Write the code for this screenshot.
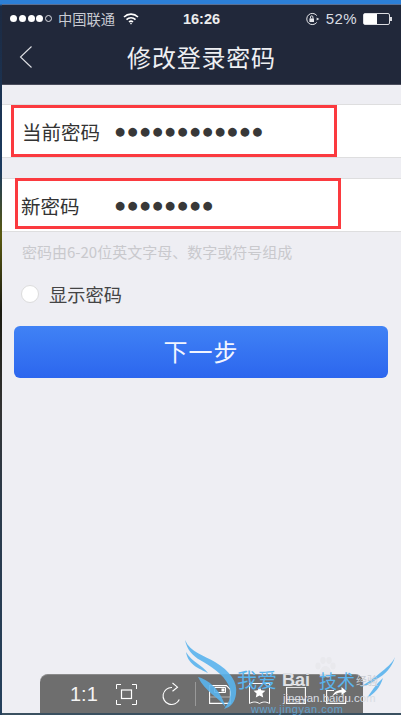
<div class="screen">
	<div class="edge"></div>
	<div class="page">
		<header class="top">
			<div class="status">
				<div class="status-left">
					<span class="signal">
						<i></i><i></i><i></i><i></i><i class="empty"></i>
					</span>
					<span>中国联通</span>
					<svg class="wifi" width="16" height="12" viewBox="0 0 16 12" fill="none" stroke="#fff" stroke-width="1.6">
						<path d="M1 4a10 10 0 0 1 14 0" />
						<path d="M3.5 6.6a6.4 6.4 0 0 1 9 0" />
						<path d="M6 9a3 3 0 0 1 4 0" />
						<circle cx="8" cy="10.6" r="0.8" fill="#fff" stroke="none" />
					</svg>
				</div>
				<div class="clock">16:26</div>
				<div class="status-right">
					<svg width="15" height="14" viewBox="0 0 15 14" fill="none" stroke="#e4e5e9" stroke-width="1">
						<path d="M11.8 3.6a5.6 5.6 0 1 0 0 6.8" />
						<path d="M11.6 5.4 14.4 7l-2.8 1.6z" fill="#e4e5e9" stroke="none" />
						<rect x="4.4" y="6.4" width="4.6" height="3.6" fill="#e4e5e9" stroke="none" />
						<path d="M5.5 6.4V5a1.2 1.2 0 0 1 2.4 0v1.4" />
					</svg>
					<span class="pct">52%</span>
					<span class="battery"><span class="level" style="width: 52%"></span></span>
				</div>
			</div>
			<div class="nav">
				<svg class="back" width="14" height="24" viewBox="0 0 14 24" fill="none" stroke="#dfe0e4" stroke-width="1.1">
					<path d="M12.5 1.5 1.5 12l11 10.5" />
				</svg>
				<h1>修改登录密码</h1>
			</div>
		</header>

		<main>
			<div class="row">
				<span class="label">当前密码</span>
				<span class="dots">{'●'.repeat(12)}</span>
				<span class="mark mark-a"></span>
			</div>
			<div class="row second">
				<span class="label">新密码</span>
				<span class="dots">{'●'.repeat(8)}</span>
				<span class="mark mark-b"></span>
			</div>
			<p class="hint">密码由6-20位英文字母、数字或符号组成</p>
			<div class="show">
				<span class="radio"></span>
				<span>显示密码</span>
			</div>
			<button class="next">下一步</button>
		</main>

		<div class="strip"></div>

		<!-- image viewer toolbar, sits over the page -->
		<div class="viewer">
			<span class="ratio">1:1</span>
			<svg width="21" height="21" viewBox="0 0 21 21" fill="none" stroke="#fff" stroke-width="1">
				<path d="M.5 5V.5h4.5M16 .5h4.5V5M20.5 16v4.5H16M5 20.5H.5V16" />
				<rect x="5.5" y="6" width="10" height="8.5" stroke-width="1.2" />
			</svg>
			<svg width="20" height="24" viewBox="0 0 20 24" fill="none" stroke="#fff" stroke-width="1.1">
				<path d="M10 5.5A8.5 8.5 0 1 0 17.3 17.5" />
				<path d="M10.5 1l5 4.2-5 4" />
			</svg>
			<span class="sep"></span>
			<svg width="22" height="19" viewBox="0 0 22 19" fill="none" stroke="#fff" stroke-width="1.1">
				<path d="M.6.6h16.8l4 4v13.8H.6z" />
				<path d="M5.5 2.5h11v5h-11z" stroke-width="1" />
				<rect x="12.5" y="3.5" width="3" height="3" fill="#fff" stroke="none" />
				<path d="M.6 12h20.8" stroke="#cfcfcf" stroke-width="0.7" />
			</svg>
			<svg width="21" height="22" viewBox="0 0 21 22" fill="none" stroke="#fff" stroke-width="1">
				<path d="M.5.5h20v20c-3.500-2-6.500-2-10 0-3.500-2-6.500-2-10 0z" />
				<path d="M10.500 3.500l1.800 3.800 4.100.5-3 2.800.8 4-3.700-2-3.700 2 .8-4-3-2.800 4.100-.5z" fill="#fff" stroke="none" />
			</svg>
			<svg width="20" height="20" viewBox="0 0 20 20" fill="none" stroke="#fff" stroke-width="1.1">
				<path d="M.6 3v16.400h18.800V3" />
				<path d="M.6 3.500h18.800" stroke-width="0.8" />
				<path d="M3 .6h14" />
				<path d="M.6 15.500h18.800" stroke-width="0.7" />
			</svg>
			<svg width="21" height="20" viewBox="0 0 21 20" fill="none" stroke="#fff" stroke-width="1.1">
				<path d="M8 6.500H.6v12.900h19V12" />
				<path d="M6 13c1.500-4.500 5-7 9.500-7V3l5 4.200-5 4V8.500c-4 0-7 1.500-9.500 4.500z" fill="#fff" stroke="none" />
			</svg>
		</div>

		<!-- site watermark, lies over the toolbar -->
		<svg class="wings" width="218" height="85" viewBox="183 630 218 85" fill="#5ab4ee" opacity="0.9">
			<path d="M185 640C190 652 205 656 215 662C230 671 238 682 236 694C235 702 231 707 224 709C230 702 232 694 229 686C223 673 210 666 200 660C193 656 187 650 185 640z" />
			<path d="M186 652C192 662 202 665 208 673C203 670 188 666 186 652z" />
			<path d="M198 677C208 680 220 688 226 708C220 698 205 692 198 677z" />
			<path d="M395 657C392 668 384 675 377 679C372 683 366 686 360 687C368 682 375 678 380 673C386 668 392 664 395 657z" />
			<path d="M383 678C380 688 374 694 367 698C371 692 376 684 383 678z" />
		</svg>
		<svg class="paw" width="24" height="24" viewBox="0 0 24 24" fill="#e8e8ec" opacity="0.8">
			<ellipse cx="5" cy="10" rx="2.600" ry="3.400" />
			<ellipse cx="10" cy="4.500" rx="2.600" ry="3.400" />
			<ellipse cx="16" cy="4.500" rx="2.600" ry="3.400" />
			<ellipse cx="20" cy="10" rx="2.600" ry="3.400" />
			<path d="M12.500 10c3 0 6 4 6 8 0 3-3 4-6 3-3 1-6 0-6-3 0-4 3-8 6-8z" />
		</svg>
		<div class="wm">
			<div class="wm-title">
				<span class="wm-blue">我爱</span>
				<span class="wm-bai">Bai</span>
				<span class="wm-blue wm-tech">技术</span>
				<span class="wm-jy">经验</span>
			</div>
			<div class="wm-url">jingyan.baidu.com</div>
			<div class="wm-www">www.jingyan.com</div>
		</div>
	</div>
</div>

<style>
	:global(body) {
		margin: 0;
		background: #eeeef3;
	}

	.screen {
		display: flex;
		width: 401px;
		height: 715px;
		overflow: hidden;
		font-family: 'Noto Sans CJK SC', 'Liberation Sans', sans-serif;
	}

	/* sliver of the desktop wallpaper at the left of the capture */
	.edge {
		flex: 0 0 2px;
		background: linear-gradient(
			#2c7fd6 0,
			#2c7fd6 4px,
			#1c2a42 6px,
			#1b3a5f 170px,
			#5a5a10 235px,
			#1a1a10 310px,
			#333 410px,
			#2b3a4a 500px,
			#24405c 715px
		);
	}

	.page {
		position: relative;
		flex: 1;
		display: flex;
		flex-direction: column;
		background: #eeeef3;
	}

	.top {
		flex: none;
		height: 85px;
		box-sizing: border-box;
		background: #21283a;
		border-top: 4px solid #2c7fd6;
		box-shadow: inset 0 1px 0 #5a6f92;
		border-bottom: 1px solid #4a4d5c;
		color: #fff;
	}

	.status {
		display: flex;
		align-items: center;
		justify-content: space-between;
		height: 29px;
		padding: 0 8px;
		font-size: 14.25px;
		color: #c9cbd2;
	}

	.status-left,
	.status-right {
		display: flex;
		align-items: center;
		gap: 6px;
		width: 130px;
	}

	.status-right {
		justify-content: flex-end;
	}

	.wifi {
		margin-left: 2px;
	}

	.clock {
		font-family: 'Liberation Sans', sans-serif;
		font-size: 14.5px;
		font-weight: 700;
		color: #eceded;
	}

	.pct {
		font-family: 'Liberation Sans', sans-serif;
		font-size: 15px;
		letter-spacing: 0.4px;
		color: #dcdde2;
	}

	.signal {
		display: flex;
		gap: 1.75px;
	}

	.signal i {
		width: 7px;
		height: 7px;
		border-radius: 50%;
		background: #fff;
	}

	.signal i.empty {
		box-sizing: border-box;
		background: none;
		border: 1px solid #dcdde2;
	}

	.battery {
		position: relative;
		display: block;
		width: 27px;
		height: 12px;
		box-sizing: border-box;
		margin-right: 3px;
		border: 1px solid #dcdde2;
		border-radius: 2px;
	}

	.battery::after {
		content: '';
		position: absolute;
		right: -3px;
		top: 3px;
		width: 2px;
		height: 4px;
		background: #dcdde2;
	}

	.level {
		display: block;
		height: 100%;
		background: #fff;
	}

	.nav {
		position: relative;
		display: flex;
		align-items: center;
		justify-content: center;
		height: 46px;
		color: #eeeff2;
	}

	.back {
		position: absolute;
		left: 17px;
		top: 12px;
	}

	h1 {
		margin: 0;
		font-size: 24px;
		font-weight: 400;
		letter-spacing: 0.8px;
	}

	main {
		flex: 1;
		padding-top: 19px;
	}

	.row {
		position: relative;
		display: flex;
		align-items: center;
		height: 54px;
		box-sizing: border-box;
		background: #fff;
		border-top: 1px solid #dededf;
		border-bottom: 1px solid #dededf;
		color: #333;
		font-size: 19.5px;
	}

	.row.second {
		margin-top: 20px;
	}

	.label {
		width: 113px;
		padding-left: 20px;
		box-sizing: border-box;
	}

	.second .label {
		padding-left: 19px;
	}

	.dots {
		font-family: 'DejaVu Sans', sans-serif;
		font-size: 11.5px;
		letter-spacing: 2.45px;
		color: #383838;
	}

	.mark {
		position: absolute;
		border: 3px solid #fb3a3f;
		box-sizing: border-box;
	}

	.mark-a {
		left: 9px;
		top: 0;
		width: 326px;
		height: 52px;
	}

	.mark-b {
		left: 13px;
		top: -1px;
		width: 326px;
		height: 51px;
	}

	.hint {
		margin: 10px 0 0 20px;
		font-size: 15px;
		line-height: 20px;
		white-space: nowrap;
		color: #c9c9cd;
	}

	.show {
		display: flex;
		align-items: center;
		gap: 10px;
		height: 24px;
		margin: 20px 0 0 19px;
		font-size: 18.25px;
		color: #444;
	}

	.radio {
		width: 16px;
		height: 16px;
		border-radius: 50%;
		background: #fff;
		border: 1px solid #dcdcdc;
	}

	.next {
		display: block;
		width: 374px;
		height: 52px;
		margin: 20px 0 0 12px;
		padding: 0 0 3px;
		border: none;
		border-radius: 6px;
		background: linear-gradient(#4082f5, #2c66ee);
		color: #f2f5ff;
		font-family: inherit;
		font-size: 24px;
		letter-spacing: 1px;
	}

	.strip {
		flex: none;
		height: 2px;
		background: #3a5060;
	}

	.viewer {
		position: absolute;
		left: 38px;
		bottom: 2px;
		width: 323px;
		height: 39px;
		display: grid;
		grid-template-columns: 46px 46px 33px 14px 40px 37px 40px 21px;
		align-items: center;
		justify-items: start;
		padding-left: 30px;
		box-sizing: border-box;
		background: #6e6e6e;
		border-top: 1px solid #8a8a8a;
		border-radius: 8px 8px 0 0;
	}

	.ratio {
		color: #f4f4f4;
		font-family: 'Liberation Sans', sans-serif;
		font-size: 20px;
	}

	.sep {
		width: 1px;
		height: 24px;
		background: #999;
	}

	.wings {
		position: absolute;
		left: 181px;
		top: 630px;
	}

	.paw {
		position: absolute;
		left: 311px;
		top: 656px;
	}

	.wm {
		position: absolute;
		left: 235px;
		top: 670px;
		width: 150px;
		white-space: nowrap;
	}

	.wm-title {
		display: flex;
		align-items: center;
		height: 20px;
	}

	.wm-blue {
		font-size: 20px;
		line-height: 20px;
		color: #5ab4ee;
	}

	.wm-bai {
		margin-left: 5px;
		font-family: 'Liberation Sans', sans-serif;
		font-size: 18px;
		font-weight: 700;
		line-height: 20px;
		color: #dfe0e4;
	}

	.wm-tech {
		margin-left: 9px;
		font-size: 18px;
	}

	.wm-jy {
		margin-left: 1px;
		font-size: 11px;
		line-height: 20px;
		color: #c9cdd3;
	}

	.wm-url {
		margin: 3px 0 0 46px;
		font-family: 'Liberation Sans', sans-serif;
		font-size: 11.5px;
		line-height: 11px;
		color: #d8dde3;
	}

	.wm-www {
		margin: 0 0 0 14px;
		font-family: 'Liberation Sans', sans-serif;
		font-size: 11px;
		line-height: 10px;
		letter-spacing: 0.5px;
		color: #5ab4ee;
		opacity: 0.7;
	}
</style>
